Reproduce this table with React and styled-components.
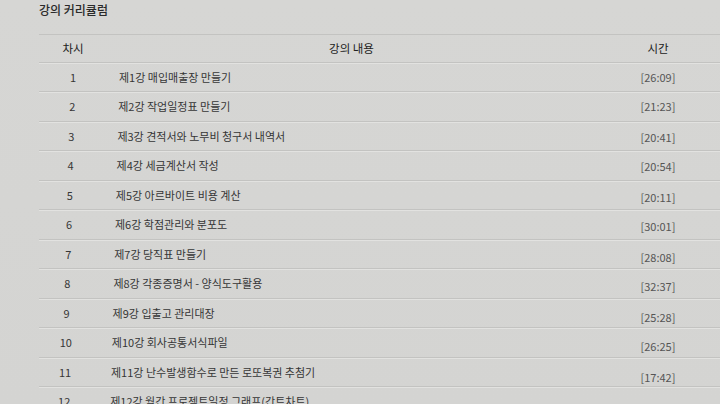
import React from "react";
import styled, { createGlobalStyle } from "styled-components";

const Global = createGlobalStyle`
  html, body { margin: 0; padding: 0; background: #d5d5d3; }
  body { font-family: "Noto Sans CJK KR", "Noto Sans", sans-serif; color: #333; }
`;

const Page = styled.div`
  width: 720px;
  height: 404px;
  overflow: hidden;
  padding: 1px 0 0 39px;
  box-sizing: border-box;
  background: linear-gradient(180deg, #d6d6d4 0%, #d4d4d2 100%);
`;

const Title = styled.h2`
  margin: 0 0 15px 0;
  font-size: 12px;
  font-weight: 500;
  line-height: 18px;
  color: #2a2a2a;
`;

const Table = styled.div`
  border-top: 1px solid #c3c3c1;
`;

const Row = styled.div`
  display: grid;
  grid-template-columns: 68px 1fr 124px;
  align-items: center;
  height: ${(p) => (p.$head ? 26.5 : 28.5)}px;
  border-bottom: 1px solid #c3c3c1;
  box-shadow: 0 1px 0 #e2e2e0;
  font-size: ${(p) => (p.$head ? 11.5 : 11)}px;
  color: ${(p) => (p.$head ? "#222" : "#363636")};
`;

const Num = styled.div`
  text-align: center;
  transform: translateX(${(p) => -(p.$i || 0) * 0.8}px);
`;

const Content = styled.div`
  text-align: ${(p) => (p.$head ? "center" : "left")};
  padding-left: ${(p) => (p.$head ? 0 : 12 - (p.$i || 0) * 0.8)}px;
  white-space: nowrap;
`;

const Time = styled.div`
  text-align: center;
  color: ${(p) => (p.$head ? "#222" : "#555")};
  transform: translateY(${(p) => (p.$i || 0) * 0.45}px);
`;

const rows = [
  ["제1강 매입매출장 만들기", "26:09"],
  ["제2강 작업일정표 만들기", "21:23"],
  ["제3강 견적서와 노무비 청구서 내역서", "20:41"],
  ["제4강 세금계산서 작성", "20:54"],
  ["제5강 아르바이트 비용 계산", "20:11"],
  ["제6강 학점관리와 분포도", "30:01"],
  ["제7강 당직표 만들기", "28:08"],
  ["제8강 각종증명서 - 양식도구활용", "32:37"],
  ["제9강 입출고 관리대장", "25:28"],
  ["제10강 회사공통서식파일", "26:25"],
  ["제11강 난수발생함수로 만든 로또복권 추첨기", "17:42"],
  ["제12강 월간 프로젝트일정 그래프(간트차트)", ""],
];

export default function App() {
  return (
    <Page>
      <Global />
      <Title>강의 커리큘럼</Title>
      <Table>
        <Row $head>
          <Num>차시</Num>
          <Content $head>강의 내용</Content>
          <Time $head>시간</Time>
        </Row>
        {rows.map(([t, m], i) => (
          <Row key={i}>
            <Num $i={i}>{i + 1}</Num>
            <Content $i={i}>{t}</Content>
            <Time $i={i}>{m ? `[${m}]` : ""}</Time>
          </Row>
        ))}
      </Table>
    </Page>
  );
}
